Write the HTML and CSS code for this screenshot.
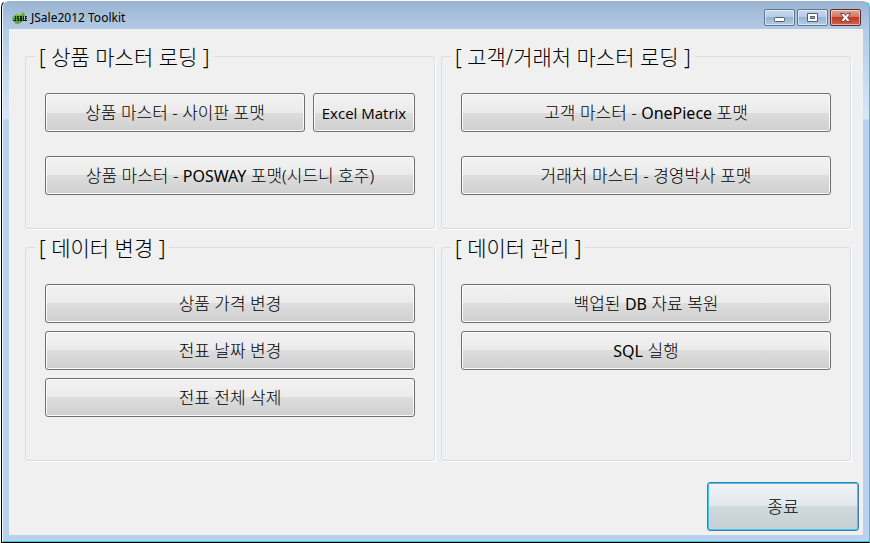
FILE: index.html
```html
<!DOCTYPE html>
<html lang="ko">
<head>
<meta charset="utf-8">
<title>JSale2012 Toolkit</title>
<link rel="stylesheet" href="styles.css">
</head>
<body>
<div class="window">
  <header class="titlebar">
    <svg class="app-icon" viewBox="0 0 16 16" aria-hidden="true">
      <path d="M1 9 Q3 4 8 4 L12 2 L14 5 Q13 9 9 12 L5 14 Z" fill="#5da52c"/>
      <path d="M4 6 Q7 4 12 2 L11 5 Z" fill="#9ccf62"/>
      <path d="M5 14 L9 12 L12 9 L13 10 L9 13 Z" fill="#3c7a1c"/>
      <path d="M4 6h1v5H2v-1h2zM6 6h2v1H7v1h1v3H6v-1h1V9H6zM9 6h2v5h-1V9v2H9zM12 6h1v4h1v1h-2zM14 6h2v1h-1v1h1v1h-1v1h1v1h-2z" fill="#14200f"/>
    </svg>
    <h1 class="title">JSale2012 Toolkit</h1>
    <div class="controls">
      <button class="control" type="button" aria-label="최소화">
        <svg viewBox="0 0 29 15"><rect x="9.500" y="7.500" width="10" height="4" rx="1" fill="#fff" stroke="#535a6b"/></svg>
      </button>
      <button class="control" type="button" aria-label="최대화">
        <svg viewBox="0 0 29 15"><path d="M9.500 3.500h10v8h-10zM12.500 6.500v2h4v-2z" fill="#fff" fill-rule="evenodd" stroke="#535a6b"/></svg>
      </button>
      <button class="control control-close" type="button" aria-label="닫기">
        <svg viewBox="0 0 29 15"><path d="M9.500 3.500h3.500l1.500 2 1.500-2h3.500l-3 4 3 4H16l-1.500-2-1.500 2H9.500l3-4z" fill="#fff" stroke="#6a4650"/></svg>
      </button>
    </div>
  </header>
  <main class="client">
    <div class="groups">
      <fieldset class="group">
        <legend>[ 상품 마스터 로딩 ]</legend>
        <div class="stack stack-wide">
          <div class="row">
            <button class="btn btn-grow" type="button">상품 마스터 - 사이판 포맷</button>
            <button class="btn btn-small" type="button">Excel Matrix</button>
          </div>
          <button class="btn" type="button">상품 마스터 - <span class="latin">POSWAY</span> 포맷(시드니 호주)</button>
        </div>
      </fieldset>
      <fieldset class="group">
        <legend>[ 고객/거래처 마스터 로딩 ]</legend>
        <div class="stack stack-wide">
          <button class="btn" type="button">고객 마스터 - <span class="latin">OnePiece</span> 포맷</button>
          <button class="btn" type="button">거래처 마스터 - 경영박사 포맷</button>
        </div>
      </fieldset>
      <fieldset class="group">
        <legend>[ 데이터 변경 ]</legend>
        <div class="stack">
          <button class="btn" type="button">상품 가격 변경</button>
          <button class="btn" type="button">전표 날짜 변경</button>
          <button class="btn" type="button">전표 전체 삭제</button>
        </div>
      </fieldset>
      <fieldset class="group">
        <legend>[ 데이터 관리 ]</legend>
        <div class="stack">
          <button class="btn" type="button">백업된 <span class="latin">DB</span> 자료 복원</button>
          <button class="btn" type="button"><span class="latin">SQL</span> 실행</button>
        </div>
      </fieldset>
    </div>
    <footer class="actions">
      <button class="btn btn-exit" type="button">종료</button>
    </footer>
  </main>
</div>
</body>
</html>
```
FILE: styles.css
```css
* { box-sizing: border-box; }

body {
  margin: 0;
  background: #fff;
  color: #000;
  font-family: "Noto Sans", "Noto Sans CJK KR", sans-serif;
}

.window {
  display: flex;
  flex-direction: column;
  min-height: 100vh;
  margin-left: 1px;
  padding: 0 6px 7px 7px;
  border: 1px solid #000;
  border-top-color: #fff;
  border-right-color: #35c3e8;
  border-radius: 7px 7px 0 0;
  background: linear-gradient(#99b4d1 0, #b4cce6 30px, #d9e7f5 118px, #b9d1ea 119px);
  box-shadow: inset 1px 0 #f2f7fc, inset 0 -1px #35c3e8;
}

.titlebar {
  display: flex;
  align-items: center;
  height: 28px;
  padding: 5px 2px 0;
}

.app-icon { width: 16px; height: 16px; }

.title {
  flex: 1;
  margin: 0 0 0 4px;
  font-size: 12px;
  font-weight: 400;
  line-height: 16px;
}

.controls { display: flex; gap: 2px; }

.control {
  width: 31px;
  height: 17px;
  padding: 0;
  border: 1px solid #5f7590;
  border-radius: 2px;
  background: linear-gradient(#c6d8ec 0, #b4cbe4 50%, #98b4d2 50%, #b2cce8 100%);
  box-shadow: inset 0 0 0 1px rgba(255, 255, 255, 0.5);
}

.control svg { display: block; width: 29px; height: 15px; }

.control-close {
  border-color: #5b2a35;
  background: linear-gradient(#e3a599 0, #d3705c 50%, #bd3a22 50%, #d1644a 100%);
}

.client {
  display: flex;
  flex: 1;
  flex-direction: column;
  background: #f0f0f0;
}

.groups {
  display: grid;
  grid-template-columns: 1fr 1fr;
  grid-template-rows: 184px 225px;
  gap: 7px 6px;
  padding: 16px 12px 0 16px;
}

.group {
  min-width: 0;
  margin: 0;
  padding: 0 19px 20px;
  border: 1px solid #d5dfe5;
  border-radius: 3px;
  box-shadow: 1px 1px #fff;
}

.group legend {
  margin-left: -10px;
  padding: 1px 4px 0;
  font-size: 21px;
  font-weight: 300;
  line-height: 22px;
}

.stack {
  display: flex;
  flex-direction: column;
  gap: 8px;
  padding-top: 25px;
}

.stack-wide { gap: 24px; }

.row { display: flex; gap: 8px; }

.btn {
  height: 39px;
  padding: 0;
  border: 1px solid #707070;
  border-radius: 3px;
  background: linear-gradient(#f2f2f2 0, #ebebeb 50%, #dddddd 50%, #cfcfcf 100%);
  box-shadow: inset 0 0 0 1px #fafafa;
  color: #000;
  font-family: inherit;
  font-size: 17px;
  font-weight: 300;
  line-height: 20px;
}

.latin {
  font-size: 16px;
  font-weight: 400;
}

.btn-grow { flex: 1; }

.btn-small {
  width: 102px;
  font-family: "Open Sans", sans-serif;
  font-size: 15px;
  font-weight: 400;
}

.actions {
  display: flex;
  justify-content: flex-end;
  margin-top: auto;
  padding: 4px;
}

.btn-exit {
  width: 152px;
  height: 49px;
  border-color: #3c7fb1;
  background: linear-gradient(#eff3f6 0, #e2e8ec 50%, #cfd9de 50%, #c6d0d5 100%);
  box-shadow: inset 0 0 0 1px #3fc6ee;
}
```
